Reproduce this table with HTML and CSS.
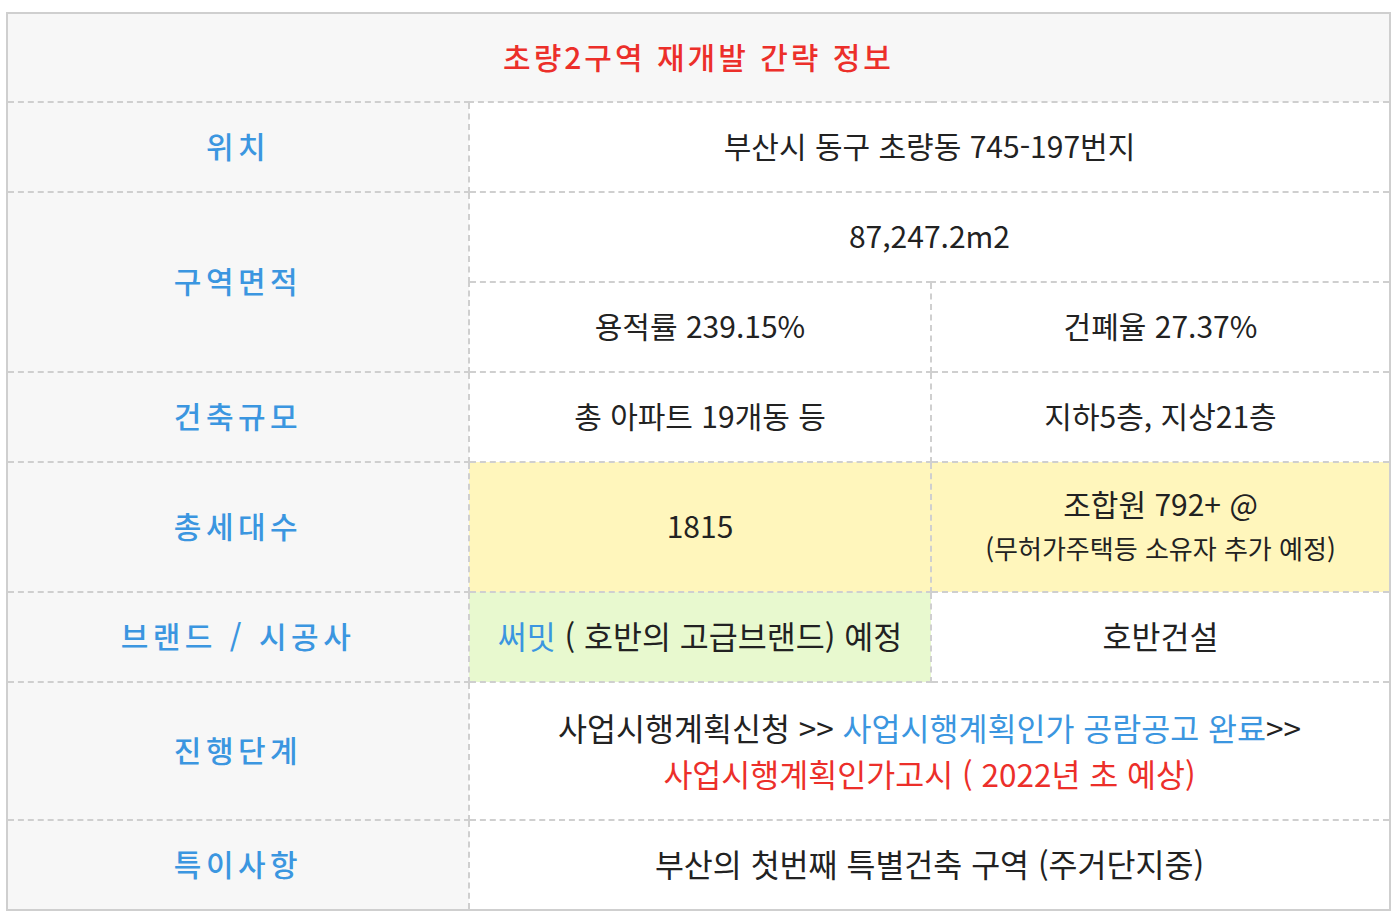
FILE: index.html
```html
<!DOCTYPE html>
<html lang="ko">
<head>
<meta charset="utf-8">
<title>초량2구역 재개발 간략 정보</title>
<link rel="stylesheet" href="styles.css">
</head>
<body>
<div class="page">
  <table class="info">
    <colgroup>
      <col class="c1"><col class="c2"><col class="c3">
    </colgroup>
    <tr class="r-head">
      <th colspan="3" class="title">초량2구역 재개발 간략 정보</th>
    </tr>
    <tr class="r90">
      <th class="label">위치</th>
      <td colspan="2">부산시 동구 초량동 745-197번지</td>
    </tr>
    <tr class="r90">
      <th class="label" rowspan="2">구역면적</th>
      <td colspan="2">87,247.2m2</td>
    </tr>
    <tr class="r90">
      <td>용적률 239.15%</td>
      <td>건폐율 27.37%</td>
    </tr>
    <tr class="r90">
      <th class="label">건축규모</th>
      <td>총 아파트 19개동 등</td>
      <td>지하5층, 지상21층</td>
    </tr>
    <tr class="r130">
      <th class="label">총세대수</th>
      <td class="yellow">1815</td>
      <td class="yellow two">조합원 792+ @<br><span class="small">(무허가주택등 소유자 추가 예정)</span></td>
    </tr>
    <tr class="r90">
      <th class="label">브랜드 / 시공사</th>
      <td class="green big"><span class="blue">써밋</span> ( 호반의 고급브랜드) 예정</td>
      <td class="big">호반건설</td>
    </tr>
    <tr class="r138">
      <th class="label">진행단계</th>
      <td colspan="2" class="steps big">사업시행계획신청 &gt;&gt; <span class="blue">사업시행계획인가 공람공고 완료</span>&gt;&gt;<br><span class="red">사업시행계획인가고시 ( 2022년 초 예상)</span></td>
    </tr>
    <tr class="r90">
      <th class="label">특이사항</th>
      <td colspan="2" class="big">부산의 첫번째 특별건축 구역 (주거단지중)</td>
    </tr>
  </table>
</div>
</body>
</html>
```

FILE: styles.css
```css
html, body {
  margin: 0;
  padding: 0;
  background: #ffffff;
}

.page {
  padding: 12px 5px 12px 6px;
}

.info {
  width: 1385px;
  table-layout: fixed;
  border-collapse: collapse;
  border: 2px solid #cfcfcf;
  font-family: "Noto Sans CJK KR", "Noto Sans", sans-serif;
  color: #222222;
}

.c1 { width: 462px; }
.c2 { width: 462px; }
.c3 { width: 459px; }

.info th,
.info td {
  border: 2px dashed #cfcfcf;
  text-align: center;
  vertical-align: middle;
  padding: 0 0 3px 0;
  font-size: 30px;
  font-weight: 400;
  line-height: 1.3;
}

.r-head { height: 89px; }
.r90 { height: 90px; }
.r130 { height: 130px; }
.r138 { height: 138px; }

.info .title {
  background: #f7f7f7;
  color: #ec2f2a;
  font-size: 30px;
  font-weight: 500;
  letter-spacing: 3px;
}

.info .label {
  background: #f7f7f7;
  color: #3b96e0;
  font-size: 30px;
  font-weight: 500;
  letter-spacing: 4.5px;
}

.info .yellow { background: #fff6bc; }
.info .green { background: #e8f9cf; }

.info .big { font-size: 31.5px; }

.info .two { line-height: 43px; }

.small {
  font-size: 26px;
}

.blue { color: #3b96e0; }
.red { color: #ec2f2a; }

.info .steps {
  line-height: 46px;
}
```
